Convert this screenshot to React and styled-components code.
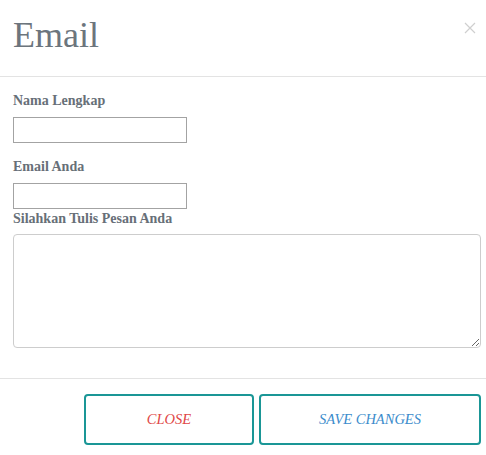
import React from 'react';
import styled, { createGlobalStyle } from 'styled-components';

const GlobalStyle = createGlobalStyle`
  body {
    margin: 0;
    background: #fff;
    font-family: "Liberation Serif", "Times New Roman", serif;
  }
`;

// Styled components
const Modal = styled.div`
  width: 486px;
  background: #fff;
`;

const Header = styled.div`
  display: flex;
  align-items: flex-start;
  justify-content: space-between;
  padding: 14px 10px 19px 13px;
  border-bottom: 1px solid #e3e3e3;
`;

const Title = styled.h1`
  margin: 0;
  font-size: 36px;
  font-weight: normal;
  line-height: 43px;
  color: #6c757d;
`;

const CloseX = styled.button`
  border: 0;
  background: none;
  padding: 0;
  margin-top: 8px;
  width: 12px;
  height: 12px;
  cursor: pointer;
  display: flex;
`;

const Body = styled.div`
  padding: 16px 5px 30px 13px;
`;

const Group = styled.div`
  margin-bottom: ${(p) => p.gap || 0}px;
`;

const Label = styled.label`
  display: block;
  margin-bottom: ${(p) => p.space || 8}px;
  font-size: 14px;
  font-weight: bold;
  line-height: 16px;
  color: #676f78;
`;

const Input = styled.input`
  display: block;
  box-sizing: border-box;
  width: 174px;
  height: 26px;
  margin: 0;
  border: 1px solid #a3a3a3;
  background: #fff;
`;

const TextArea = styled.textarea`
  display: block;
  box-sizing: border-box;
  width: 468px;
  height: 114px;
  margin: 0;
  border: 1px solid #cdcdcd;
  border-radius: 4px;
  background: #fff;
`;

const Footer = styled.div`
  display: flex;
  justify-content: flex-end;
  gap: 5px;
  padding: 15px 5px 10px;
  border-top: 1px solid #e3e3e3;
`;

const Button = styled.button`
  box-sizing: border-box;
  width: ${(p) => p.w}px;
  height: 51px;
  border: 2px solid #1a9696;
  border-radius: 4px;
  background: #fff;
  font-family: "Liberation Serif", "Times New Roman", serif;
  font-style: italic;
  font-size: 14.5px;
  color: ${(p) => p.color};
  cursor: pointer;
`;

const App = () => {
  return (
    <Modal>
      <GlobalStyle />
      <Header>
        <Title>Email</Title>
        <CloseX aria-label="Close">
          <svg width="12" height="12" viewBox="0 0 12 12">
            <path d="M1 1 L11 11 M11 1 L1 11" stroke="#cfcfcf" strokeWidth="1.2" />
          </svg>
        </CloseX>
      </Header>
      <Body>
        <Group gap={16}>
          <Label>Nama Lengkap</Label>
          <Input type="text" />
        </Group>
        <Group gap={2}>
          <Label>Email Anda</Label>
          <Input type="email" />
        </Group>
        <Group>
          <Label space={7}>Silahkan Tulis Pesan Anda</Label>
          <TextArea />
        </Group>
      </Body>
      <Footer>
        <Button w={170} color="#e04646">CLOSE</Button>
        <Button w={222} color="#3b8ccc">SAVE CHANGES</Button>
      </Footer>
    </Modal>
  );
};

export default App;
